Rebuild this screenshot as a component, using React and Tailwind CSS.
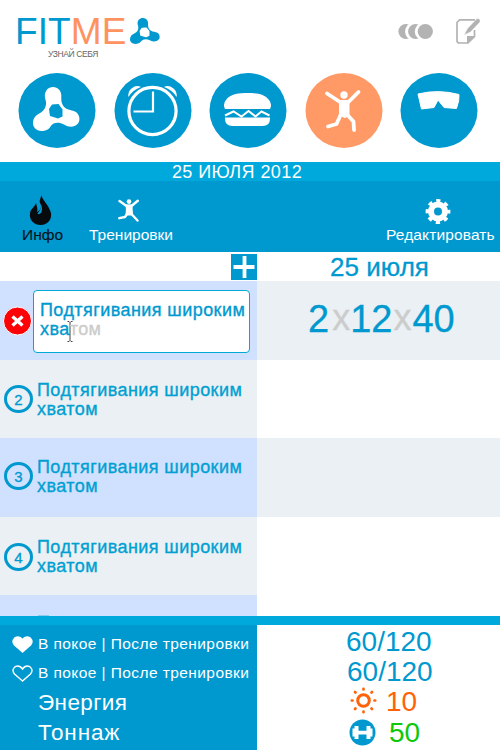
import React from "react";

const Molecule = ({ className, hole }) => (
  <svg className={className} x="15" y="14" width="47" height="44" viewBox="0 0 47 44" preserveAspectRatio="none">
    <path
      fill="currentColor"
      d="M20 0C25 0 28.500 4 28.300 9C28 15 29 19 33 21.500C36 23.500 40 23 43 25C47 28 47.500 34 44.500 37C41 40.500 36 40.500 31 37.500C26 35 20.500 35 17.500 39.500C15.500 43 12 44 8.500 44C3 44 0 40 0 36C0 31 3 28 8 25.500C13 22 14 17 12.300 12C10.500 6 14 0 20 0Z"
    />
    <path className={hole} d="M19 17.500L25.500 17L29.500 22.500L29.500 29.500L25 31.500L17 29L16 22Z" strokeLinejoin="round" />
  </svg>
);

const Disc = ({ orange, children }) => (
  <svg className="h-[75px] w-[78px] shrink-0 text-white" viewBox="0 0 78 75">
    <ellipse cx="39" cy="37.500" rx="38.500" ry="37.400" className={orange ? "fill-[#ff9966]" : "fill-[#0099cf]"} />
    {children}
  </svg>
);

const Jumper = ({ className }) => (
  <svg className={className} viewBox="0 0 21 23" fill="none" stroke="#fff" strokeLinecap="round" strokeLinejoin="round">
    <circle cx="11" cy="2.600" r="2.300" fill="#fff" stroke="none" />
    <path strokeWidth="2.400" d="M1.500 2L8.500 7H13.500L19.800 1.800M9 15L7 18L1.300 19.200M13 14.500L19.500 21.500" />
    <path fill="#fff" strokeWidth="1.800" d="M8.500 6.500H13.700V10L14.200 15.500H8.500L8.800 10Z" />
  </svg>
);

const Num = ({ n, className }) => (
  <div
    className={
      "ml-1 flex h-7 w-[29px] shrink-0 items-center justify-center rounded-[50%] border-[3px] border-[#0099cf] text-[15px] leading-none text-[#0099cf] [-webkit-text-stroke:0.3px_#0099cf] " +
      className
    }
  >
    {n}
  </div>
);

const Exercise = ({ n, row, num, text }) => (
  <div className={"flex " + row}>
    <div className={"flex w-[257px] items-start " + (n % 2 ? "bg-[#d0e0ff]" : "bg-[#eaf0f4]")}>
      <Num n={n} className={num} />
      <div className={"ml-1 text-[18px] leading-[19px] tracking-[0.430px] text-[#00a0d2] [-webkit-text-stroke:0.35px_#00a0d2] " + text}>
        <div className="whitespace-nowrap">Подтягивания широким</div>
        <div>хватом</div>
      </div>
    </div>
    <div className={"flex-1 " + (n % 2 ? "bg-[#eaf0f4]" : "bg-white")} />
  </div>
);

const Heart = ({ filled }) => (
  <svg className="mt-px h-[18px] w-[21px] shrink-0" viewBox="0 0 21 18">
    <path
      d="M10.500 16L2.500 9C-1 5 2.500 1 5.500 1C8 1 9.500 2.500 10.500 4C11.500 2.500 13 1 15.500 1C18.500 1 22 5 18.500 9Z"
      fill={filled ? "#fff" : "none"}
      stroke="#fff"
      strokeWidth="1.400"
    />
  </svg>
);

export default function App() {
  return (
    <div className="flex h-[750px] w-[500px] flex-col overflow-hidden bg-white font-['Liberation_Sans',Arial,sans-serif]">
      <header className="flex h-[73px] shrink-0 items-start pl-[15px]">
        <div className="w-[114px] pt-[13px]">
          <div className="flex text-[37px] leading-[37px] tracking-[0.100px]">
            <span className="text-[#0099cf]">FIT</span>
            <span className="text-[#ff935f]">ME</span>
          </div>
          <div className="ml-[33px] text-[8.500px] leading-[9px] tracking-[-0.400px] whitespace-nowrap text-[#666]">УЗНАЙ СЕБЯ</div>
        </div>
        <Molecule className="mt-[18px] ml-px h-[26px] w-[30px] text-[#0099cf]" hole="fill-white stroke-white stroke-2" />
        <svg className="mt-[23px] ml-[238px] h-[17px] w-9" viewBox="0 0 36 17">
          <g fill="#b3b3b3">
            <circle cx="7.900" cy="8.500" r="7.500" />
            <circle cx="16" cy="8.500" r="9" fill="#fff" />
            <circle cx="17.600" cy="8.500" r="7.500" />
            <circle cx="25.800" cy="8.500" r="9" fill="#fff" />
            <circle cx="27.300" cy="8.500" r="7.600" />
          </g>
        </svg>
        <svg className="mt-[18px] ml-[21px] h-[27px] w-[26px]" viewBox="0 0 26 27">
          <path d="M20 1.800H4.500L2 4.500V22.500Q2 25 4.500 25H13L19.500 18.500V12" fill="none" stroke="#b3b3b3" strokeWidth="1.700" />
          <path d="M12 25.500V18H20V19Z" fill="#b3b3b3" />
          <path d="M9 17L12.500 10.500L21.500 1Q23 0 24.500 1.200Q26 3 24.500 4.500L15.500 14Z" fill="#b3b3b3" stroke="#fff" strokeWidth=".4" />
        </svg>
      </header>

      <nav className="flex h-[89px] shrink-0 items-start justify-between pr-[22px] pl-[18px]">
        <Disc>
          <Molecule hole="fill-[#0099cf]" />
        </Disc>
        <Disc>
          <g fill="none" stroke="#fff">
            <circle cx="38.500" cy="38" r="23.600" strokeWidth="3.200" />
            <path d="M39 18.500V38.500H19.500" strokeWidth="2.200" />
          </g>
          <path d="M14.500 24Q13.500 19 17.500 15.500Q22.500 11.500 27 14Q18.500 17 14.500 24Z" fill="#fff" />
          <path d="M62.500 24Q63.500 19 59.500 15.500Q54.500 11.500 50 14Q58.500 17 62.500 24Z" fill="#fff" />
        </Disc>
        <Disc>
          <path d="M16 36Q13.500 31 17 27C21.500 20.500 30.500 20 38.500 20C46.500 20 55.500 20.500 60 27Q63.500 31 61 36Z" fill="#fff" />
          <path d="M16 42.500L24.500 38.500L32.500 43.500L39.500 38L46.500 43.500L52.500 38.500L60.500 42.500" fill="none" stroke="#fff" strokeWidth="2" />
          <path d="M16 44.500H61Q61.500 53 53.500 53H23.500Q15.500 53 16 44.500Z" fill="#fff" />
        </Disc>
        <Disc orange>
          <g fill="none" stroke="#fff" strokeLinecap="round" strokeLinejoin="round">
            <circle cx="39" cy="22" r="3.700" fill="#fff" stroke="none" />
            <path strokeWidth="3.800" d="M22 20.500L35 29H43.500L53.500 19M36 41L31.500 51L23 53.500M41.500 41L48.500 48.500L49 57" />
            <path fill="#fff" strokeWidth="2" d="M35 28H43.500V42L39.500 44L35 41.500Z" />
          </g>
        </Disc>
        <Disc>
          <path d="M18 21Q38.500 16 59 21.500Q59.500 27 56.500 35.500L44 34.500L38 27L34 34.500L21.500 36Z" fill="#fff" stroke="#fff" strokeLinejoin="round" />
        </Disc>
      </nav>

      <div className="h-[19px] shrink-0 bg-[#00a9dc] pr-[26px] text-center text-[18px] leading-[20px] tracking-[0.420px] whitespace-nowrap text-white">
        25 ИЮЛЯ 2012
      </div>

      <div className="flex h-[71px] shrink-0 bg-[#0099cf] text-[15.500px] leading-[18px]">
        <div className="ml-[22px] w-[67px] pt-[14px]">
          <svg className="ml-[7px] h-[31px] w-[23px]" viewBox="0 0 23 31">
            <path
              d="M12.500 0C13 5 20 10 22 18C23 24 19 30 11.500 30C4 30 0 24 1 18C2 13 6 12 7 8C8 12 9 14 8 17C12 15 13 11 11 8C10 5 12 3 12.500 0Z"
              fill="#080b0e"
            />
            <path d="M11 9Q13 14 8.500 18.500Q10 20 12 18Q14 14 12 10Z" fill="#0099cf" />
          </svg>
          <div className="text-[#08151d] [-webkit-text-stroke:0.2px]">Инфо</div>
        </div>
        <div className="w-[297px] pt-[18px] text-white">
          <Jumper className="ml-[29px] h-[23px] w-[21px]" />
          <div className="mt-1">Тренировки</div>
        </div>
        <div className="pt-[17px] whitespace-nowrap text-white">
          <svg className="ml-[39px] h-[27px] w-[26px]" viewBox="0 0 26 27">
            <circle cx="13" cy="13.500" r="7" fill="none" stroke="#fff" strokeWidth="6" />
            <circle cx="13" cy="13.500" r="10.700" fill="none" stroke="#fff" strokeWidth="3.400" strokeDasharray="4.200 4.203" strokeDashoffset="2.100" />
          </svg>
          <div className="mt-px tracking-[0.130px]">Редактировать</div>
        </div>
      </div>

      <div className="flex h-[29px] shrink-0">
        <div className="flex w-[257px] justify-end pt-[2px]">
          <svg className="h-[26px] w-[26px]" viewBox="0 0 26 26">
            <path fill="#0099cf" d="M0 0H26V26H0Z" />
            <path d="M13.500 2V24M2.500 13H23.500" stroke="#fff" strokeWidth="3.800" />
          </svg>
        </div>
        <div className="flex-1 pl-[2px] text-center text-[26px] leading-[30px] text-[#0099cf] [-webkit-text-stroke:0.3px]">25 июля</div>
      </div>

      <div className="flex h-[79px] shrink-0">
        <div className="flex w-[257px] items-start bg-[#d0e0ff]">
          <svg className="mt-[25px] ml-[2px] h-[30px] w-[30px] shrink-0" viewBox="0 0 30 30">
            <circle cx="15.500" cy="15" r="14" fill="#fc0308" stroke="#fff" />
            <path d="M10.500 10.500L20.500 19.500M20.500 10.500L10.500 19.500" stroke="#fff" strokeWidth="3.300" />
          </svg>
          <div className="mt-[9px] ml-px h-[63px] w-[217px] rounded-[4px] border border-[#00a9d6] bg-white pt-[10px] pl-[6px] text-[18px] leading-[19px] tracking-[0.430px] text-[#0099cf] [-webkit-text-stroke:0.35px]">
            <div className="whitespace-nowrap">Подтягивания широким</div>
            <div className="flex">
              <span>хва</span>
              <svg className="-mx-[3px] mt-px h-[21px] w-[6px]" viewBox="0 0 6 21">
                <path d="M.5 .5H2L3 1.500L4 .5H5.500M3 1.500V19.500M.5 20.500H2L3 19.500L4 20.500H5.500" fill="none" stroke="#444" />
              </svg>
              <span className="text-[#ccc]">том</span>
            </div>
          </div>
        </div>
        <div className="flex flex-1 items-start bg-[#eaf0f4] pt-[16px] pl-[51px] text-[38px] leading-[44px] text-[#0099cf] [-webkit-text-stroke:0.3px]">
          <span>2</span>
          <span className="-mt-px w-[21px] pl-[3px] text-[36px] text-[#ccc]">x</span>
          <span>12</span>
          <span className="-mt-px w-[20px] pl-px text-[36px] text-[#ccc]">x</span>
          <span>40</span>
        </div>
      </div>
      <Exercise n={2} row="h-[78px] shrink-0" num="mt-[25px]" text="mt-[21px]" />
      <Exercise n={3} row="h-[79px] shrink-0" num="mt-[24px]" text="mt-[20px]" />
      <Exercise n={4} row="h-[78px] shrink-0" num="mt-[26px]" text="mt-[21px]" />
      <div className="flex h-[21px] shrink-0">
        <div className="flex w-[257px] items-end bg-[#d0e0ff] pl-[38px]">
          <div className="h-px w-[11px] bg-[#8fc9ee]" />
        </div>
      </div>
      <div className="h-[9px] shrink-0 bg-[#00a9dc]" />

      <footer className="flex flex-1">
        <div className="w-[257px] bg-[#0099cf] pl-[12px] text-white">
          <div className="flex h-[29px] pt-[10px]">
            <Heart filled />
            <span className="ml-[5px] text-[15.500px] leading-[17px] tracking-[0.420px] whitespace-nowrap">В покое | После тренировки</span>
          </div>
          <div className="flex h-[34px] pt-[10px]">
            <Heart />
            <span className="ml-[5px] text-[15.500px] leading-[17px] tracking-[0.420px] whitespace-nowrap">В покое | После тренировки</span>
          </div>
          <div className="pl-[26px] text-[22.500px] leading-[30px]">
            <div className="tracking-[0.400px]">Энергия</div>
            <div className="tracking-[0.900px]">Тоннаж</div>
          </div>
        </div>
        <div className="flex-1 pl-[89px] text-[28px] leading-[30px] text-[#0099cf]">
          <div className="pt-[2px]">60/120</div>
          <div className="pl-px">60/120</div>
          <div className="flex pl-[4px] text-[#ff6208]">
            <svg className="h-[27px] w-[27px]" viewBox="0 0 27 27">
              <circle cx="13.500" cy="13.500" r="5.800" fill="none" stroke="currentColor" strokeWidth="3" />
              <path
                d="M13.500 1.800V2.500M13.500 24.500V25.200M1.800 13.500H2.500M24.500 13.500H25.200M5 5L5.500 5.500M21.500 21.500L22 22M5 22L5.500 21.500M21.500 5.500L22 5"
                stroke="currentColor"
                strokeWidth="2.700"
                strokeLinecap="round"
              />
            </svg>
            <span className="ml-[9px]">10</span>
          </div>
          <div className="flex pl-[3px] text-[#0fc80a]">
            <svg className="mt-[2px] h-[27px] w-[27px]" viewBox="0 0 27 27">
              <circle cx="13.500" cy="13.500" r="13" fill="#0099cf" />
              <path d="M5.500 7H9.500V11.800H17.500V7H21.500V9.500H23.500V17.500H21.500V20H17.500V15.500H9.500V20H5.500V17.500H3.500V9.500H5.500Z" fill="#fff" />
            </svg>
            <span className="ml-[13px] pt-px">50</span>
          </div>
        </div>
      </footer>
    </div>
  );
}
